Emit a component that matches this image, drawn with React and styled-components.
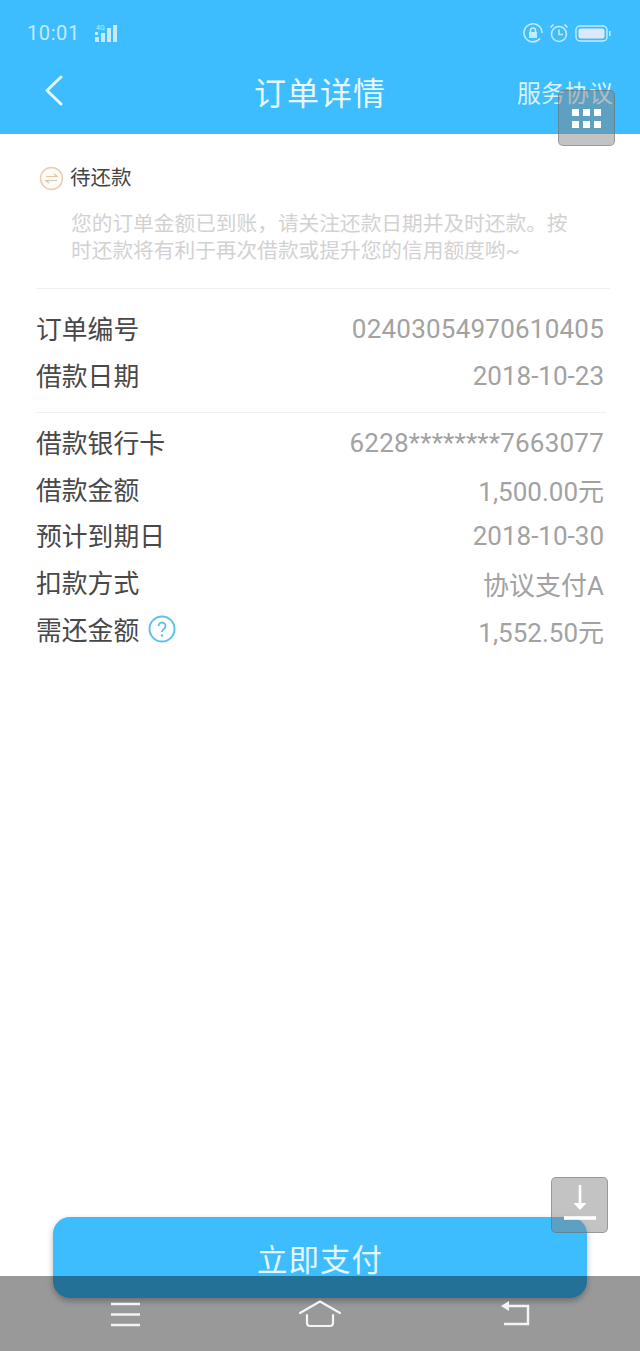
import React from 'react';
import styled, { createGlobalStyle } from 'styled-components';

const GlobalStyle = createGlobalStyle`
  html, body {
    margin: 0;
    padding: 0;
    background: #fff;
  }
  body {
    font-family: "Roboto", "Noto Sans CJK SC", sans-serif;
  }
`;

const Page = styled.div`
  position: relative;
  width: 640px;
  height: 1351px;
  overflow: hidden;
  display: flex;
  flex-direction: column;
  background: #fff;
`;

const Header = styled.header`
  height: 134px;
  flex: none;
  background: #3dbdfd;
  color: #fff;
  display: flex;
  flex-direction: column;
`;

const StatusBar = styled.div`
  height: 66px;
  padding: 0 29px 0 27px;
  display: flex;
  align-items: center;
  justify-content: space-between;
  color: #c4eafd;
`;

const StatusGroup = styled.div`
  display: flex;
  align-items: center;
  gap: ${(p) => p.$gap || 6}px;
`;

const Clock = styled.span`
  font-size: 20px;
  letter-spacing: 0.6px;
`;

const TitleRow = styled.div`
  height: 52px;
  margin-top: -1px;
  padding: 0 27px;
  display: grid;
  grid-template-columns: 1fr auto 1fr;
  align-items: center;
`;

const BackSlot = styled.span`
  display: flex;
  padding-left: 17px;
`;

const Title = styled.h1`
  margin: 0;
  font-size: 32px;
  font-weight: 400;
  color: #e6f7ff;
  letter-spacing: 1px;
`;

const HeaderLink = styled.span`
  justify-self: end;
  font-size: 24px;
  color: #d8f2ff;
`;

const Body = styled.main`
  flex: 1;
  padding: 0 36px;
`;

const StatusSection = styled.section`
  margin-right: -6px;
  padding: 30px 0 23px;
  border-bottom: 1px solid #f0f0f0;
`;

const StatusHead = styled.div`
  display: flex;
  align-items: center;
  gap: 6px;
  padding-left: 3px;
  font-size: 20.5px;
  line-height: 28px;
  color: #444;
`;

const Notice = styled.p`
  margin: 19px 36px 0 35px;
  font-size: 20.7px;
  line-height: 27px;
  color: #d2d2d2;
`;

const RowGroup = styled.section`
  padding: ${(p) => p.$pad};
  ${(p) => p.$divided && 'margin-right: -2px; border-bottom: 1px solid #f0f0f0;'}
`;

const Row = styled.div`
  height: 46.8px;
  display: flex;
  align-items: center;
  justify-content: space-between;
  padding-right: ${(p) => p.$inset || 0}px;
`;

const Label = styled.span`
  display: flex;
  align-items: center;
  gap: 9px;
  font-size: 25.8px;
  color: #484848;
`;

const Value = styled.span`
  padding-top: 3px;
  font-size: 26px;
  letter-spacing: ${(p) => (p.$wide ? '0.22px' : '0')};
  color: #a2a2a2;
`;

const Footer = styled.div`
  flex: none;
  padding: 0 53px 53px;
`;

const PayButton = styled.button`
  display: block;
  width: 100%;
  height: 81px;
  padding: 1px 0 0;
  border: none;
  border-radius: 17px;
  background: #3dbdfd;
  color: #e6f7ff;
  font-family: inherit;
  font-size: 30.5px;
  letter-spacing: 1px;
  box-shadow: 0 3px 6px rgba(0, 0, 0, 0.28);
`;

const NavBar = styled.nav`
  position: absolute;
  left: 0;
  right: 0;
  bottom: 0;
  height: 75px;
  padding: 24px 109px 0;
  box-sizing: border-box;
  display: flex;
  justify-content: space-between;
  align-items: flex-start;
  background: rgba(0, 0, 0, 0.4);
  color: #f4f4f4;
`;

const FloatingKey = styled.div`
  position: absolute;
  left: ${(p) => p.$left}px;
  top: ${(p) => p.$top}px;
  width: 57px;
  height: 56px;
  box-sizing: border-box;
  border: 1px solid rgba(100, 100, 100, 0.45);
  border-radius: 5px;
  background: rgba(130, 130, 130, 0.48);
  display: flex;
  align-items: center;
  justify-content: center;
`;

const orderRows = [
  ['订单编号', '02403054970610405', true],
  ['借款日期', '2018-10-23'],
];

const loanRows = [
  ['借款银行卡', '6228********7663077', true],
  ['借款金额', '1,500.00元'],
  ['预计到期日', '2018-10-30'],
  ['扣款方式', '协议支付A'],
];

function BackIcon() {
  return (
    <svg width="20" height="32" viewBox="0 0 20 32" fill="none" stroke="#e6f7ff" strokeWidth="3" strokeLinecap="round" strokeLinejoin="round">
      <path d="M17 2 3 15.5 17 29" />
    </svg>
  );
}

function SignalIcon() {
  return (
    <svg width="24" height="20" viewBox="0 0 24 20" fill="currentColor">
      <rect x="1" y="14" width="4" height="5" />
      <rect x="1" y="9" width="3" height="3" />
      <rect x="7" y="10" width="4" height="9" />
      <rect x="13" y="5" width="4" height="14" />
      <rect x="19" y="2" width="4" height="17" />
      <text x="2" y="7" fontSize="7" fontFamily="Roboto, sans-serif">4G</text>
    </svg>
  );
}

function LockRingIcon() {
  return (
    <svg width="20" height="20" viewBox="0 0 20 20" fill="none" stroke="currentColor" strokeWidth="1.6">
      <path d="M17 15.5A9 9 0 1 1 19 10" />
      <rect x="6" y="9" width="8" height="6" fill="currentColor" stroke="none" />
      <path d="M7.5 9V7.5a2.5 2.5 0 0 1 5 0V9" />
    </svg>
  );
}

function AlarmIcon() {
  return (
    <svg width="20" height="20" viewBox="0 0 20 20" fill="none" stroke="currentColor" strokeWidth="1.6">
      <circle cx="10" cy="11" r="7.5" />
      <path d="M10 6.5V11.5H14M1.5 4.5 4.5 1.5M18.5 4.5 15.5 1.5" />
    </svg>
  );
}

function BatteryIcon() {
  return (
    <svg width="36" height="17" viewBox="0 0 36 17">
      <rect x="1" y="1" width="31" height="15" rx="4" fill="none" stroke="currentColor" strokeWidth="1.4" />
      <rect x="3.5" y="3.5" width="26" height="10" rx="2" fill="#d9e8fb" />
      <rect x="34" y="6" width="1.6" height="5" fill="currentColor" />
    </svg>
  );
}

function RepayIcon() {
  return (
    <svg width="25" height="25" viewBox="0 0 25 25" fill="#fbfbf8" stroke="#ebcdb4" strokeWidth="1.5">
      <circle cx="12.5" cy="12.5" r="11" />
      <path d="M7 10.5h11l-3-2.5" stroke="#e8c49c" strokeWidth="1.2" fill="none" />
      <path d="M18 14.5H7l3 2.5" stroke="#c9c9b4" strokeWidth="1.2" fill="none" />
    </svg>
  );
}

function HelpIcon() {
  return (
    <svg width="28" height="28" viewBox="0 0 28 28" fill="none" stroke="#5cc3e6" strokeWidth="2">
      <circle cx="14" cy="14" r="12.5" />
      <path d="M10.5 11a3.5 3.5 0 1 1 5.6 2.8c-1.3 1-2.1 1.6-2.1 3.2" strokeWidth="1.8" />
      <circle cx="14" cy="20.5" r="1.2" fill="#5cc3e6" stroke="none" />
    </svg>
  );
}

function GridIcon() {
  const cells = [0, 11, 22].flatMap((x) => [0, 12].map((y) => [x, y]));
  return (
    <svg width="29" height="19" viewBox="0 0 29 19" fill="#fff">
      {cells.map(([x, y]) => (
        <rect key={`${x}-${y}`} x={x} y={y} width="7" height="7" />
      ))}
    </svg>
  );
}

function DownloadIcon() {
  return (
    <svg width="34" height="44" viewBox="0 0 34 44" fill="none" stroke="#fff">
      <path d="M17 2V24" strokeWidth="2.6" />
      <path d="M10.5 20h13L17 27z" fill="#fff" stroke="none" />
      <path d="M1 35H33" strokeWidth="3.6" />
    </svg>
  );
}

function MenuIcon() {
  return (
    <svg width="32" height="28" viewBox="0 0 32 28" fill="none" stroke="currentColor" strokeWidth="2.4">
      <path d="M2 4H31M2 14.5H31M2 25H31" />
    </svg>
  );
}

function HomeIcon() {
  return (
    <svg width="44" height="28" viewBox="0 0 44 28" fill="none" stroke="currentColor" strokeWidth="2.2" strokeLinejoin="round" strokeLinecap="round">
      <path d="M2 13 22 1.5 42 13" />
      <path d="M9 15V23a3 3 0 0 0 3 3H32a3 3 0 0 0 3-3V15" />
    </svg>
  );
}

function ReturnIcon() {
  return (
    <svg width="32" height="26" viewBox="0 0 32 26" fill="none" stroke="currentColor" strokeWidth="2.4">
      <path d="M7 6H29V24H5" />
      <path d="M10 1V11L2 6z" fill="currentColor" stroke="none" />
    </svg>
  );
}

export default function App() {
  return (
    <Page>
      <GlobalStyle />
      <Header>
        <StatusBar>
          <StatusGroup $gap={14}>
            <Clock>10:01</Clock>
            <SignalIcon />
          </StatusGroup>
          <StatusGroup $gap={6}>
            <LockRingIcon />
            <AlarmIcon />
            <BatteryIcon />
          </StatusGroup>
        </StatusBar>
        <TitleRow>
          <BackSlot>
            <BackIcon />
          </BackSlot>
          <Title>订单详情</Title>
          <HeaderLink>服务协议</HeaderLink>
        </TitleRow>
      </Header>

      <Body>
        <StatusSection>
          <StatusHead>
            <RepayIcon />
            待还款
          </StatusHead>
          <Notice>您的订单金额已到账，请关注还款日期并及时还款。按时还款将有利于再次借款或提升您的信用额度哟~</Notice>
        </StatusSection>

        <RowGroup $divided $pad="15px 0 14.4px">
          {orderRows.map(([label, value, wide]) => (
            <Row key={label} $inset={2}>
              <Label>{label}</Label>
              <Value $wide={wide}>{value}</Value>
            </Row>
          ))}
        </RowGroup>

        <RowGroup $pad="5px 0 0">
          {loanRows.map(([label, value, wide]) => (
            <Row key={label}>
              <Label>{label}</Label>
              <Value $wide={wide}>{value}</Value>
            </Row>
          ))}
          <Row>
            <Label>
              需还金额
              <HelpIcon />
            </Label>
            <Value>1,552.50元</Value>
          </Row>
        </RowGroup>
      </Body>

      <Footer>
        <PayButton type="button">立即支付</PayButton>
      </Footer>

      <NavBar>
        <MenuIcon />
        <HomeIcon />
        <ReturnIcon />
      </NavBar>

      <FloatingKey $left={558} $top={90}>
        <GridIcon />
      </FloatingKey>
      <FloatingKey $left={551} $top={1177}>
        <DownloadIcon />
      </FloatingKey>
    </Page>
  );
}
